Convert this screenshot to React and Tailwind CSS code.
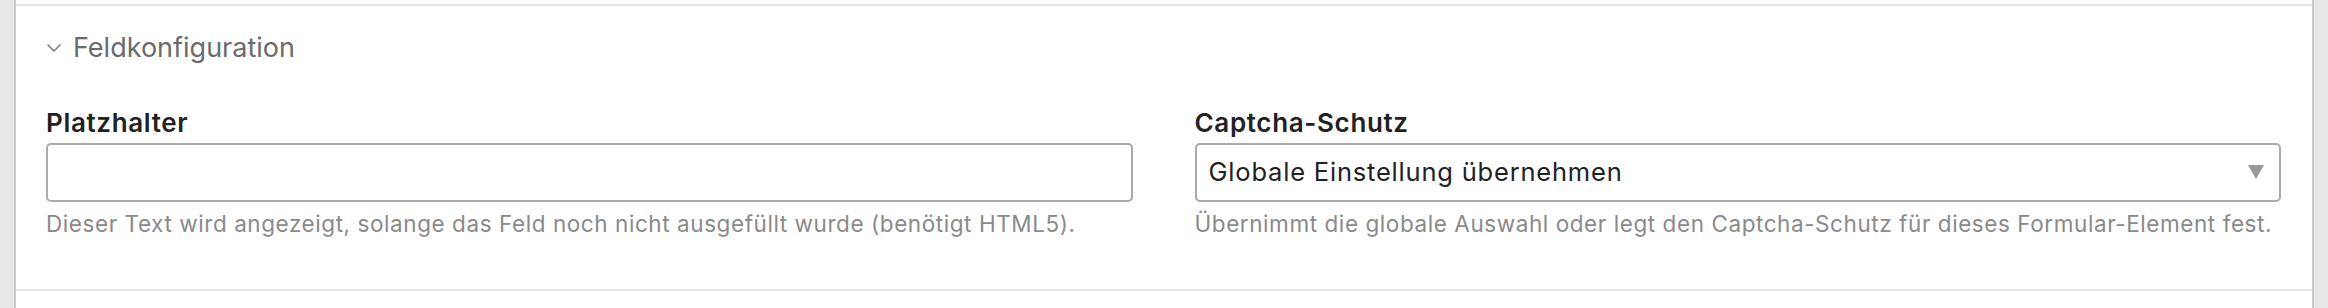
import { useState } from "react";

function Chevron() {
  return (
    <svg width="14" height="8" viewBox="0 0 14 8" fill="none" className="shrink-0">
      <path d="M1 1l6 6 6-6" stroke="#707070" strokeWidth="1.4" strokeLinecap="round" strokeLinejoin="round" />
    </svg>
  );
}

function Field({ label, help, children }) {
  return (
    <div className="flex flex-col">
      <label className="block text-[26px] leading-[30px] tracking-[0.65px] font-semibold text-[#222]">{label}</label>
      <div className="mt-[5px]">{children}</div>
      <p className="mt-[9px] text-[22.5px] leading-[26px] tracking-[0.57px] text-[#8a8a8a] whitespace-nowrap">{help}</p>
    </div>
  );
}

export default function App() {
  const [placeholder, setPlaceholder] = useState("");
  const [captcha, setCaptcha] = useState("global");

  return (
    <div className="flex w-full h-[308px] bg-[#e9e9eb] font-['Inter',sans-serif]">
      <div className="w-[14px] shrink-0" />
      <div className="flex-1 flex flex-col bg-white border-x-2 border-[#cbcbcd]">
        <div className="h-[4px]" />
        <section className="border-y-2 border-[#e6e6e6] pl-[30px] pr-[31px] pt-[26px] pb-[52px]">
          <div className="flex items-center h-[32px]">
            <span className="ml-[1px] mr-[12px] flex items-center">
              <Chevron />
            </span>
            <span className="text-[27px] leading-[32px] text-[#6b6b6b]">Feldkonfiguration</span>
          </div>

          <div className="grid grid-cols-2 gap-[62px] mt-[44px]">
            <Field
              label="Platzhalter"
              help="Dieser Text wird angezeigt, solange das Feld noch nicht ausgefüllt wurde (benötigt HTML5)."
            >
              <input
                type="text"
                value={placeholder}
                onChange={(e) => setPlaceholder(e.target.value)}
                className="block w-full h-[59px] border-2 border-[#ababab] rounded-[5px] px-3 text-[24px] text-[#222] outline-none"
              />
            </Field>

            <Field
              label="Captcha-Schutz"
              help="Übernimmt die globale Auswahl oder legt den Captcha-Schutz für dieses Formular-Element fest."
            >
              <div className="relative">
                <select
                  value={captcha}
                  onChange={(e) => setCaptcha(e.target.value)}
                  className="block w-full h-[59px] appearance-none border-2 border-[#ababab] rounded-[5px] pl-[12px] pr-10 text-[25.5px] tracking-[0.8px] text-[#222] bg-white outline-none"
                >
                  <option value="global">Globale Einstellung übernehmen</option>
                  <option value="on">Aktiviert</option>
                  <option value="off">Deaktiviert</option>
                </select>
                <svg
                  width="16"
                  height="14"
                  viewBox="0 0 16 14"
                  className="pointer-events-none absolute right-[17px] top-[22px]"
                >
                  <path d="M0 0h16L8 14z" fill="#9a9a9a" />
                </svg>
              </div>
            </Field>
          </div>
        </section>
      </div>
      <div className="w-[14px] shrink-0" />
    </div>
  );
}
